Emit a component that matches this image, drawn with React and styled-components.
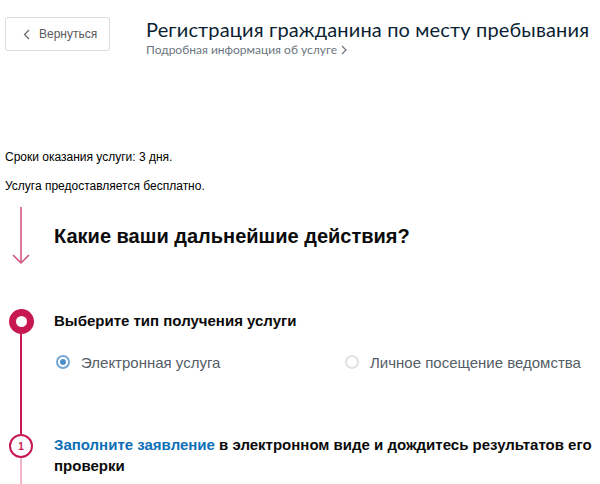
import styled, { createGlobalStyle } from "styled-components";

const GlobalStyle = createGlobalStyle`
  html, body {
    margin: 0;
    padding: 0;
    background: #fff;
  }
  body {
    font-family: "Liberation Sans", Arial, sans-serif;
    color: #000;
  }
  * {
    box-sizing: border-box;
  }
`;

const accent = "#c7194f";

const Page = styled.div`
  width: 600px;
  height: 484px;
  overflow: hidden;
`;

const Header = styled.header`
  display: flex;
  align-items: flex-start;
  gap: 36px;
  padding: 17px 0 0 5px;
`;

const BackButton = styled.button`
  display: flex;
  align-items: center;
  gap: 9px;
  width: 105px;
  height: 34px;
  padding: 0 0 0 17px;
  border: 1px solid #dcdcdc;
  border-radius: 3px;
  background: #fff;
  color: #5a5a5a;
  font-family: "Liberation Sans", Arial, sans-serif;
  font-size: 12px;
  cursor: pointer;
`;

const TitleBlock = styled.div`
  display: flex;
  flex-direction: column;
`;

const Title = styled.h1`
  margin: 0;
  font-family: Lato, "Noto Sans", sans-serif;
  font-weight: 400;
  font-size: 20px;
  line-height: 24px;
  letter-spacing: 0.15px;
  color: #0b1f33;
`;

const MoreLink = styled.a`
  display: flex;
  align-items: center;
  gap: 4px;
  margin-top: 1px;
  font-family: Lato, "Noto Sans", sans-serif;
  font-size: 12px;
  line-height: 16px;
  color: #6b7680;
  text-decoration: none;
`;

const Info = styled.div`
  padding: 92px 0 0 5px;
`;

const InfoLine = styled.p`
  margin: 0 0 15px;
  font-size: 12px;
  line-height: 14px;
`;

const Steps = styled.section`
  display: flex;
  flex-direction: column;
`;

const Row = styled.div`
  display: grid;
  grid-template-columns: 42px 1fr;
  column-gap: 12px;
  margin-top: ${({ $top }) => $top || 0}px;
`;

const Rail = styled.div`
  display: flex;
  flex-direction: column;
  align-items: center;
`;

const RailLine = styled.div`
  flex: 1;
  width: 2px;
  background: ${({ $light }) => ($light ? "#f0b7c9" : accent)};
`;

const ArrowBox = styled.div`
  display: flex;
  align-items: center;
  height: 60px;
`;

const Question = styled.h2`
  margin: 0;
  font-size: 20px;
  font-weight: 700;
  line-height: 24px;
  color: #0b0b0b;
`;

const RingMarker = styled.div`
  width: 25px;
  height: 25px;
  border-radius: 50%;
  border: 7px solid ${accent};
  background: #fff;
`;

const NumberMarker = styled.div`
  display: flex;
  align-items: center;
  justify-content: center;
  width: 24px;
  height: 24px;
  border-radius: 50%;
  border: 2px solid ${accent};
  color: ${accent};
  font-size: 10px;
  font-weight: 700;
`;

const StepBody = styled.div`
  padding-bottom: ${({ $bottom }) => $bottom || 0}px;
`;

const StepTitle = styled.h3`
  margin: 0;
  font-size: 15px;
  font-weight: 700;
  line-height: ${({ $lh }) => $lh || 24}px;
  color: #0b0b0b;
`;

const Link = styled.a`
  color: #0d6fb8;
  text-decoration: none;
`;

const RadioGroup = styled.div`
  display: grid;
  grid-template-columns: 289px 1fr;
  margin-top: 19px;
  padding-left: 2px;
`;

const RadioLabel = styled.label`
  display: flex;
  align-items: center;
  gap: 11px;
  height: 20px;
  font-size: 15px;
  color: #555d66;
  cursor: pointer;
`;

const RadioDot = styled.span`
  display: flex;
  align-items: center;
  justify-content: center;
  width: 14px;
  height: 14px;
  border-radius: 50%;
  border: 2px solid ${({ $checked }) => ($checked ? "#73a8d6" : "#e2e2e2")};
  background: #fff;
  &::after {
    content: "";
    display: ${({ $checked }) => ($checked ? "block" : "none")};
    width: 6px;
    height: 6px;
    border-radius: 50%;
    background: #4f8fc8;
  }
`;

const Radio = ({ checked, children }) => (
  <RadioLabel>
    <RadioDot $checked={checked} />
    {children}
  </RadioLabel>
);

export default function App() {
  return (
    <Page>
      <GlobalStyle />
      <Header>
        <BackButton>
          <svg width="7" height="11" viewBox="0 0 7 11">
            <polyline points="6,1 1.5,5.5 6,10" fill="none" stroke="#666" strokeWidth="1.2" />
          </svg>
          Вернуться
        </BackButton>
        <TitleBlock>
          <Title>Регистрация гражданина по месту пребывания</Title>
          <MoreLink href="#">
            Подробная информация об услуге
            <svg width="6" height="10" viewBox="0 0 6 10">
              <polyline points="1,1 5,5 1,9" fill="none" stroke="#6b7680" strokeWidth="1.2" />
            </svg>
          </MoreLink>
        </TitleBlock>
      </Header>

      <Info>
        <InfoLine>Сроки оказания услуги: 3 дня.</InfoLine>
        <InfoLine>Услуга предоставляется бесплатно.</InfoLine>
      </Info>

      <Steps>
        <Row $top={-2}>
          <Rail>
            <svg width="20" height="60" viewBox="0 0 20 60">
              <line x1="10" y1="1" x2="10" y2="57" stroke="#cf4d7a" strokeWidth="1.5" />
              <polyline points="2,49 10,57 18,49" fill="none" stroke="#cf4d7a" strokeWidth="1.5" />
            </svg>
          </Rail>
          <ArrowBox>
            <Question>Какие ваши дальнейшие действия?</Question>
          </ArrowBox>
        </Row>

        <Row $top={43}>
          <Rail>
            <RingMarker />
            <RailLine />
          </Rail>
          <StepBody $bottom={62}>
            <StepTitle>Выберите тип получения услуги</StepTitle>
            <RadioGroup>
              <Radio checked>Электронная услуга</Radio>
              <Radio>Личное посещение ведомства</Radio>
            </RadioGroup>
          </StepBody>
        </Row>

        <Row>
          <Rail>
            <NumberMarker>1</NumberMarker>
            <RailLine $light />
          </Rail>
          <StepBody $bottom={20}>
            <StepTitle $lh={21}>
              <Link href="#">Заполните заявление</Link> в электронном виде и дождитесь результатов его проверки
            </StepTitle>
          </StepBody>
        </Row>
      </Steps>
    </Page>
  );
}
